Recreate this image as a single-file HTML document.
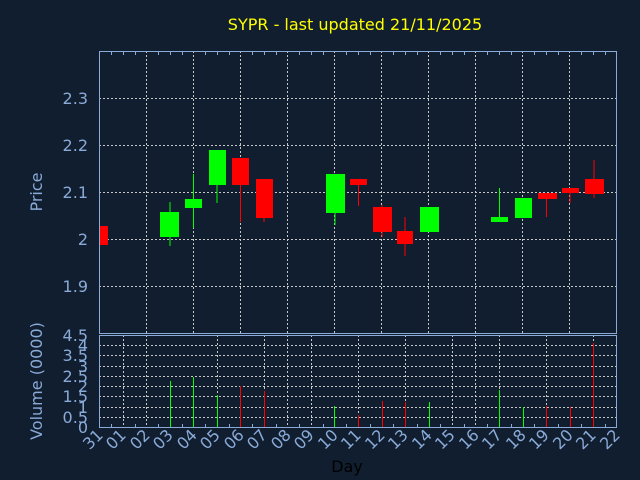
<!DOCTYPE html>
<html><head><style>
body{margin:0;background:#101e2f;}
svg{display:block;font-family:"DejaVu Sans","Liberation Sans",sans-serif;}
</style></head><body>
<svg width="640" height="480" viewBox="0 0 640 480">
<rect width="640" height="480" fill="#101e2f"/>
<text x="355" y="30" fill="#ffff00" font-size="16" text-anchor="middle">SYPR - last updated 21/11/2025</text>
<g stroke="#c8c8c8" stroke-dasharray="2,2" stroke-width="1">
<line x1="99" y1="98.5" x2="617" y2="98.5"/><line x1="99" y1="145.5" x2="617" y2="145.5"/><line x1="99" y1="192.5" x2="617" y2="192.5"/><line x1="99" y1="239.5" x2="617" y2="239.5"/><line x1="99" y1="286.5" x2="617" y2="286.5"/>
<line x1="146.5" y1="51" x2="146.5" y2="333"/><line x1="193.5" y1="51" x2="193.5" y2="333"/><line x1="240.5" y1="51" x2="240.5" y2="333"/><line x1="287.5" y1="51" x2="287.5" y2="333"/><line x1="334.5" y1="51" x2="334.5" y2="333"/><line x1="381.5" y1="51" x2="381.5" y2="333"/><line x1="428.5" y1="51" x2="428.5" y2="333"/><line x1="475.5" y1="51" x2="475.5" y2="333"/><line x1="522.5" y1="51" x2="522.5" y2="333"/><line x1="569.5" y1="51" x2="569.5" y2="333"/>
<line x1="99" y1="345.5" x2="617" y2="345.5"/><line x1="99" y1="355.5" x2="617" y2="355.5"/><line x1="99" y1="366.5" x2="617" y2="366.5"/><line x1="99" y1="376.5" x2="617" y2="376.5"/><line x1="99" y1="386.5" x2="617" y2="386.5"/><line x1="99" y1="396.5" x2="617" y2="396.5"/><line x1="99" y1="407.5" x2="617" y2="407.5"/><line x1="99" y1="417.5" x2="617" y2="417.5"/>
<line x1="123.5" y1="335" x2="123.5" y2="427"/><line x1="146.5" y1="335" x2="146.5" y2="427"/><line x1="217.5" y1="335" x2="217.5" y2="427"/><line x1="264.5" y1="335" x2="264.5" y2="427"/><line x1="287.5" y1="335" x2="287.5" y2="427"/><line x1="311.5" y1="335" x2="311.5" y2="427"/><line x1="358.5" y1="335" x2="358.5" y2="427"/><line x1="405.5" y1="335" x2="405.5" y2="427"/><line x1="452.5" y1="335" x2="452.5" y2="427"/><line x1="475.5" y1="335" x2="475.5" y2="427"/><line x1="499.5" y1="335" x2="499.5" y2="427"/><line x1="546.5" y1="335" x2="546.5" y2="427"/><line x1="593.5" y1="335" x2="593.5" y2="427"/>
</g>
<g fill="none" stroke="#8aaad8" stroke-width="1">
<rect x="99.5" y="51.5" width="517" height="282"/>
<rect x="99.5" y="335.5" width="517" height="92"/>
<path d="M111.5 52v3M123.5 52v3M135.5 52v3M158.5 52v3M170.5 52v3M182.5 52v3M205.5 52v3M217.5 52v3M229.5 52v3M252.5 52v3M264.5 52v3M276.5 52v3M299.5 52v3M311.5 52v3M323.5 52v3M346.5 52v3M358.5 52v3M370.5 52v3M393.5 52v3M405.5 52v3M417.5 52v3M440.5 52v3M452.5 52v3M464.5 52v3M487.5 52v3M499.5 52v3M511.5 52v3M534.5 52v3M546.5 52v3M558.5 52v3M581.5 52v3M593.5 52v3M605.5 52v3"/>
<path d="M111.5 427v-3M135.5 427v-3M158.5 427v-3M182.5 427v-3M205.5 427v-3M229.5 427v-3M252.5 427v-3M276.5 427v-3M299.5 427v-3M323.5 427v-3M346.5 427v-3M370.5 427v-3M393.5 427v-3M417.5 427v-3M440.5 427v-3M464.5 427v-3M487.5 427v-3M511.5 427v-3M534.5 427v-3M558.5 427v-3M581.5 427v-3M605.5 427v-3"/>
</g>
<g>
<rect x="100" y="226" width="8" height="19" fill="#f00"/>
<line x1="170" y1="202" x2="170" y2="246" stroke="#0f0"/><rect x="160" y="212" width="19" height="25" fill="#0f0"/>
<line x1="193.5" y1="174" x2="193.5" y2="228" stroke="#0f0"/><rect x="185" y="199" width="17" height="9" fill="#0f0"/>
<line x1="217" y1="185" x2="217" y2="203" stroke="#0f0"/><rect x="209" y="150" width="17" height="35" fill="#0f0"/>
<line x1="240.5" y1="158" x2="240.5" y2="222" stroke="#f00"/><rect x="232" y="158" width="17" height="27" fill="#f00"/>
<line x1="264" y1="179" x2="264" y2="222" stroke="#f00"/><rect x="256" y="179" width="17" height="39" fill="#f00"/>
<line x1="335" y1="174" x2="335" y2="225" stroke="#0f0"/><rect x="326" y="174" width="19" height="39" fill="#0f0"/>
<line x1="358.5" y1="179" x2="358.5" y2="206" stroke="#f00"/><rect x="350" y="179" width="17" height="6" fill="#f00"/>
<line x1="382" y1="205" x2="382" y2="237" stroke="#f00"/><rect x="373" y="207" width="19" height="25" fill="#f00"/>
<line x1="405" y1="217" x2="405" y2="256" stroke="#f00"/><rect x="397" y="231" width="16" height="13" fill="#f00"/>
<rect x="420" y="207" width="19" height="25" fill="#0f0"/>
<line x1="499.5" y1="188" x2="499.5" y2="222" stroke="#0f0"/><rect x="491" y="217" width="17" height="5" fill="#0f0"/>
<rect x="515" y="198" width="17" height="20" fill="#0f0"/>
<line x1="546.5" y1="193" x2="546.5" y2="217" stroke="#f00"/><rect x="538" y="193" width="19" height="6" fill="#f00"/>
<line x1="570" y1="188" x2="570" y2="203" stroke="#f00"/><rect x="562" y="188" width="17" height="5" fill="#f00"/>
<line x1="594" y1="160" x2="594" y2="198" stroke="#f00"/><rect x="585" y="179" width="19" height="15" fill="#f00"/>
</g>
<g stroke-width="1">
<line x1="170.5" y1="381" x2="170.5" y2="427" stroke="#0f0"/>
<line x1="193.5" y1="377" x2="193.5" y2="427" stroke="#0f0"/>
<line x1="217.5" y1="395" x2="217.5" y2="427" stroke="#0f0"/>
<line x1="240.5" y1="386" x2="240.5" y2="427" stroke="#f00"/>
<line x1="264.5" y1="391" x2="264.5" y2="427" stroke="#f00"/>
<line x1="334.5" y1="406" x2="334.5" y2="427" stroke="#0f0"/>
<line x1="358.5" y1="415" x2="358.5" y2="427" stroke="#f00"/>
<line x1="382.5" y1="401" x2="382.5" y2="427" stroke="#f00"/>
<line x1="405.5" y1="402" x2="405.5" y2="427" stroke="#f00"/>
<line x1="429.5" y1="402" x2="429.5" y2="427" stroke="#0f0"/>
<line x1="499.5" y1="390" x2="499.5" y2="427" stroke="#0f0"/>
<line x1="523.5" y1="407" x2="523.5" y2="427" stroke="#0f0"/>
<line x1="546.5" y1="406" x2="546.5" y2="427" stroke="#f00"/>
<line x1="570.5" y1="407" x2="570.5" y2="427" stroke="#f00"/>
<line x1="593.5" y1="343" x2="593.5" y2="427" stroke="#f00"/>
</g>
<g fill="#8aaad8" font-size="16" text-anchor="end">
<text x="88" y="104">2.3</text><text x="88" y="151">2.2</text><text x="88" y="198">2.1</text><text x="88" y="245">2</text><text x="88" y="292">1.9</text>
<text x="88" y="341">4.5</text><text x="88" y="351">4</text><text x="88" y="361">3.5</text><text x="88" y="372">3</text><text x="88" y="382">2.5</text><text x="88" y="392">2</text><text x="88" y="402">1.5</text><text x="88" y="413">1</text><text x="88" y="423">0.5</text><text x="88" y="433">0</text>
</g>
<text transform="translate(42,192) rotate(-90)" fill="#8aaad8" font-size="16" text-anchor="middle">Price</text>
<text transform="translate(42,381) rotate(-90)" fill="#8aaad8" font-size="16" text-anchor="middle">Volume (0000)</text>
<g fill="#8aaad8" font-size="16" text-anchor="end">
<text transform="translate(104,436) rotate(-45)">31</text><text transform="translate(127,436) rotate(-45)">01</text><text transform="translate(151,436) rotate(-45)">02</text><text transform="translate(174,436) rotate(-45)">03</text><text transform="translate(198,436) rotate(-45)">04</text><text transform="translate(221,436) rotate(-45)">05</text><text transform="translate(245,436) rotate(-45)">06</text><text transform="translate(268,436) rotate(-45)">07</text><text transform="translate(292,436) rotate(-45)">08</text><text transform="translate(315,436) rotate(-45)">09</text><text transform="translate(339,436) rotate(-45)">10</text><text transform="translate(362,436) rotate(-45)">11</text><text transform="translate(386,436) rotate(-45)">12</text><text transform="translate(409,436) rotate(-45)">13</text><text transform="translate(433,436) rotate(-45)">14</text><text transform="translate(456,436) rotate(-45)">15</text><text transform="translate(480,436) rotate(-45)">16</text><text transform="translate(503,436) rotate(-45)">17</text><text transform="translate(527,436) rotate(-45)">18</text><text transform="translate(550,436) rotate(-45)">19</text><text transform="translate(574,436) rotate(-45)">20</text><text transform="translate(597,436) rotate(-45)">21</text><text transform="translate(621,436) rotate(-45)">22</text>
</g>
<text x="347" y="472" fill="#000" font-size="16" text-anchor="middle">Day</text>
</svg>
</body></html>
